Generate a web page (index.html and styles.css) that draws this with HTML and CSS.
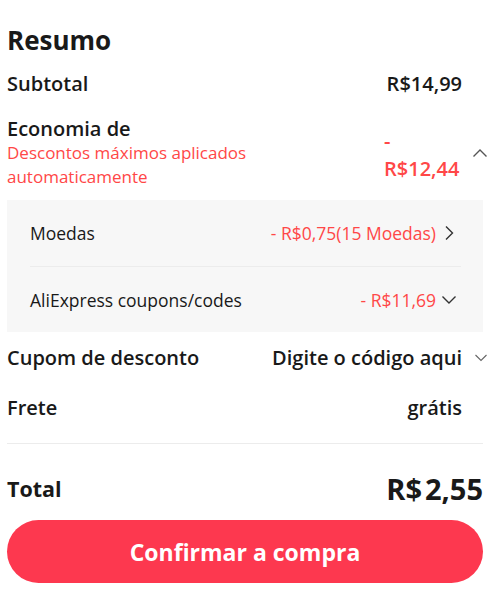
FILE: index.html
```html
<!DOCTYPE html>
<html lang="pt-BR">
<head>
    <meta charset="UTF-8">
    <meta name="viewport" content="width=device-width, initial-scale=1.0">
    <title>Resumo</title>
    <link rel="stylesheet" href="styles.css">
</head>
<body>
    <div class="summary">
        <h1>Resumo</h1>

        <div class="row row-sub">
            <span class="label">Subtotal</span>
            <span class="value">R$14,99</span>
            <span class="icon"></span>
        </div>

        <div class="row row-saving">
            <div class="saving-left">
                <span class="label">Economia de</span>
                <span class="hint">Descontos máximos aplicados automaticamente</span>
            </div>
            <span class="value red saving-value">-<br>R$12,44</span>
            <span class="icon">
                <svg width="16" height="10" viewBox="0 0 16 10"><path d="M1.5 8.5L8 2l6.5 6.5" fill="none" stroke="#555" stroke-width="1.4"/></svg>
            </span>
        </div>

        <div class="panel">
            <div class="panel-row">
                <span class="label">Moedas</span>
                <span class="value red">- R$0,75(15 Moedas)</span>
                <span class="icon">
                    <svg width="10" height="16" viewBox="0 0 10 16"><path d="M2 1.5L8.5 8 2 14.5" fill="none" stroke="#333" stroke-width="1.4"/></svg>
                </span>
            </div>
            <div class="panel-row">
                <span class="label">AliExpress coupons/codes</span>
                <span class="value red">- R$11,69</span>
                <span class="icon">
                    <svg width="16" height="10" viewBox="0 0 16 10"><path d="M1.5 1.5L8 8l6.5-6.5" fill="none" stroke="#333" stroke-width="1.4"/></svg>
                </span>
            </div>
        </div>

        <div class="row row-plain">
            <span class="label">Cupom de desconto</span>
            <span class="value">Digite o código aqui</span>
            <span class="icon">
                <svg width="14" height="9" viewBox="0 0 14 9"><path d="M1.5 2l5.5 5.5L12.5 2" fill="none" stroke="#666" stroke-width="1.1"/></svg>
            </span>
        </div>

        <div class="row row-plain">
            <span class="label">Frete</span>
            <span class="value">grátis</span>
            <span class="icon"></span>
        </div>

        <hr class="divider">

        <div class="row row-total">
            <span class="label">Total</span>
            <span class="total-value">R$&#8202;2,55</span>
        </div>

        <button class="confirm">Confirmar a compra</button>
    </div>
</body>
</html>
```

FILE: styles.css
```css
body {
    margin: 0;
    padding: 0;
    font-family: "Open Sans", Arial, sans-serif;
    color: #191919;
    background-color: #fff;
}

.summary {
    margin: 0 17px 0 7px;
}

h1 {
    margin: 24px 0 0;
    font-size: 26px;
    line-height: 32px;
    font-weight: 700;
}

.row {
    display: flex;
    align-items: center;
}

.label {
    flex: 1;
    font-size: 20px;
    font-weight: 600;
}

.value {
    font-size: 20px;
    font-weight: 600;
    text-align: right;
}

.red {
    color: #ff4747;
}

.icon {
    width: 26px;
    margin-right: -5px;
    display: flex;
    justify-content: flex-end;
    align-items: center;
}

.row-sub {
    height: 38px;
    margin-top: 8px;
}

.row-saving {
    margin-top: 15px;
}

.saving-left {
    flex: 1;
    display: flex;
    flex-direction: column;
}

.saving-left .label {
    line-height: 24px;
}

.hint {
    color: #ff4747;
    font-size: 17px;
    line-height: 24px;
    width: 270px;
}

.saving-value {
    line-height: 28px;
    text-align: left;
    width: 78px;
    margin-top: 4px;
}

.panel {
    background-color: #f7f7f7;
    margin-top: 11px;
    padding: 0 22px 0 23px;
}

.panel-row {
    display: flex;
    align-items: center;
    height: 66px;
}

.panel-row + .panel-row {
    border-top: 1px solid #ececec;
    height: 65px;
}

.panel-row .label,
.panel-row .value {
    font-size: 17.5px;
    font-weight: 500;
}

.panel-row .icon {
    width: 25px;
    margin-right: 0;
    justify-content: center;
}

.row-plain {
    height: 50px;
}

.row-plain:first-of-type {
    margin-top: 1px;
}

.divider {
    border: none;
    border-top: 1px solid #ececec;
    margin: 11px 0 0;
}

.row-total {
    height: 48px;
    margin-top: 20px;
}

.row-total .label {
    font-size: 21.5px;
    font-weight: 700;
}

.total-value {
    font-size: 29px;
    font-weight: 700;
}

.confirm {
    display: block;
    width: 476px;
    height: 63px;
    margin-top: 8px;
    border: none;
    border-radius: 32px;
    background-color: #fd384f;
    color: #fff;
    font-family: "Open Sans", Arial, sans-serif;
    font-size: 23px;
    font-weight: 700;
    cursor: pointer;
}
```
